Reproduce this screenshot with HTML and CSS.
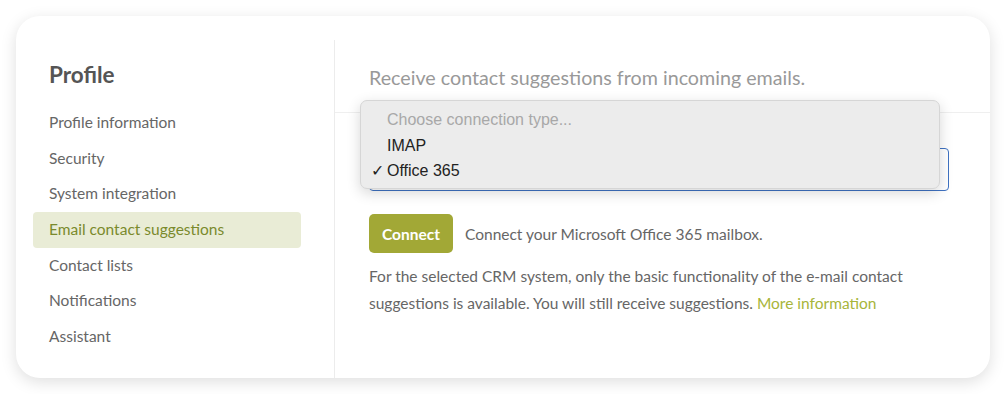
FILE: index.html
```html
<!DOCTYPE html>
<html lang="en">
<head>
<meta charset="UTF-8">
<title>Profile - Email contact suggestions</title>
<link rel="stylesheet" href="styles.css">
</head>
<body>
<div class="card">
    <div class="sidebar">
        <h2>Profile</h2>
        <ul class="menu">
            <li>Profile information</li>
            <li>Security</li>
            <li>System integration</li>
            <li class="ativo">Email contact suggestions</li>
            <li>Contact lists</li>
            <li>Notifications</li>
            <li>Assistant</li>
        </ul>
    </div>
    <div class="painel">
        <div class="cabecalho">Receive contact suggestions from incoming emails.</div>
        <div class="conteudo">
            <div class="campo">
                <div class="select">
                    <svg class="seta" width="8" height="8" viewBox="0 0 8 8"><path d="M1 6 L5 2" stroke="#333" stroke-width="1.2" fill="none"/></svg>
                </div>
                <div class="lista">
                    <div class="opcao placeholder">Choose connection type...</div>
                    <div class="opcao">IMAP</div>
                    <div class="opcao"><span class="check">✓</span>Office 365</div>
                </div>
            </div>
            <div class="linha-botao">
                <button>Connect</button>
                <span>Connect your Microsoft Office 365 mailbox.</span>
            </div>
            <p>For the selected CRM system, only the basic functionality of the e-mail contact suggestions is available. You will still receive suggestions. <a href="#">More information</a></p>
        </div>
    </div>
</div>
</body>
</html>
```

FILE: styles.css
```css
body { margin: 0; padding: 16px; background: #fff; font-family: Lato, "Open Sans", sans-serif; }
.card { width: 974px; height: 362px; background: #fff; border-radius: 24px; box-shadow: 0 4px 16px rgba(0,0,0,0.13); display: flex; overflow: hidden; }
.sidebar { width: 268px; margin-top: 24px; padding: 20px 33px 0 17px; border-right: 1px solid #ececec; flex-shrink: 0; }
.sidebar h2 { margin: 0 0 15px 16px; font-size: 22.5px; line-height: 30px; font-weight: 700; color: #555; }
.menu { list-style: none; margin: 0; padding: 0; }
.menu li { padding: 0 16px; height: 35.67px; line-height: 35.67px; font-size: 15.5px; color: #666; border-radius: 4px; }
.menu li.ativo { background: #e9ecd6; color: #7a8a2c; }
.painel { flex: 1; margin-top: 24px; }
.cabecalho { height: 73px; padding: 2px 34px 0 34px; border-bottom: 1px solid #efefef; font-size: 19.7px; color: #999; display: flex; align-items: center; box-sizing: border-box; }
.conteudo { padding: 35px 34px 0 34px; }
.campo { position: relative; width: 580px; }
.select { height: 43px; box-sizing: border-box; border: 1px solid #3f72c2; border-radius: 4px; display: flex; align-items: center; justify-content: flex-end; padding: 0 6px 0 12px; }
.seta { margin-top: 6px; }
.lista { position: absolute; left: -9px; top: -48px; width: 580px; height: 89px; box-sizing: border-box; background: #ececec; border: 1px solid #d6d6d6; border-radius: 7px; box-shadow: 0 4px 14px rgba(0,0,0,0.16); padding-top: 6px; font-family: "Liberation Sans", Arial, sans-serif; font-size: 16px; }
.opcao { height: 25.5px; line-height: 25.5px; padding-left: 10px; color: #222; }
.opcao.placeholder { color: #a8a8a8; }
.check { display: inline-block; width: 16px; }
.opcao:not(:last-child) { padding-left: 26px; }
.linha-botao { display: flex; align-items: center; gap: 12px; margin-top: 23px; font-size: 15.5px; color: #666; }
button { width: 84px; height: 39px; border: none; border-radius: 5px; background: #a2a836; color: #fff; font-family: Lato, sans-serif; font-size: 15.5px; font-weight: 700; padding: 0; }
p { margin: 10px 0 0 0; width: 560px; font-size: 15.5px; line-height: 27px; color: #666; }
a { color: #a7b53a; text-decoration: none; }
```
